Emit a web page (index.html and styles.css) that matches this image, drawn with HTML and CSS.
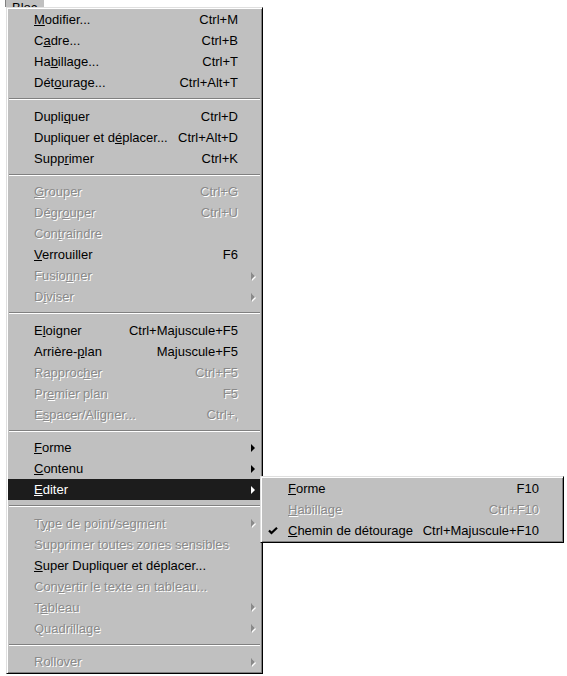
FILE: index.html
```html
<!DOCTYPE html>
<html>
  <head>
    <title>Bloc</title>
    <link rel="stylesheet" href="styles.css">
  </head>
  <body>
    <div class="menubar">
      <span class="menubar-item"><u>B</u>loc</span>
    </div>

    <div class="menu">
      <div class="item"><span class="check"></span><span class="label"><u>M</u>odifier...</span><span class="key">Ctrl+M</span><span class="arrow"></span></div>
      <div class="item"><span class="check"></span><span class="label">C<u>a</u>dre...</span><span class="key">Ctrl+B</span><span class="arrow"></span></div>
      <div class="item"><span class="check"></span><span class="label">Ha<u>b</u>illage...</span><span class="key">Ctrl+T</span><span class="arrow"></span></div>
      <div class="item"><span class="check"></span><span class="label">Dét<u>o</u>urage...</span><span class="key">Ctrl+Alt+T</span><span class="arrow"></span></div>
      <div class="sep"></div>
      <div class="item"><span class="check"></span><span class="label">Dupli<u>q</u>uer</span><span class="key">Ctrl+D</span><span class="arrow"></span></div>
      <div class="item"><span class="check"></span><span class="label">Dupliquer et d<u>é</u>placer...</span><span class="key">Ctrl+Alt+D</span><span class="arrow"></span></div>
      <div class="item"><span class="check"></span><span class="label">Supp<u>r</u>imer</span><span class="key">Ctrl+K</span><span class="arrow"></span></div>
      <div class="sep"></div>
      <div class="item disabled"><span class="check"></span><span class="label"><u>G</u>rouper</span><span class="key">Ctrl+G</span><span class="arrow"></span></div>
      <div class="item disabled"><span class="check"></span><span class="label">Dégr<u>o</u>uper</span><span class="key">Ctrl+U</span><span class="arrow"></span></div>
      <div class="item disabled"><span class="check"></span><span class="label">Con<u>t</u>raindre</span><span class="key"></span><span class="arrow"></span></div>
      <div class="item"><span class="check"></span><span class="label"><u>V</u>errouiller</span><span class="key">F6</span><span class="arrow"></span></div>
      <div class="item disabled"><span class="check"></span><span class="label">Fusio<u>n</u>ner</span><span class="key"></span><span class="arrow sub"></span></div>
      <div class="item disabled"><span class="check"></span><span class="label">D<u>i</u>viser</span><span class="key"></span><span class="arrow sub"></span></div>
      <div class="sep"></div>
      <div class="item"><span class="check"></span><span class="label">E<u>l</u>oigner</span><span class="key">Ctrl+Majuscule+F5</span><span class="arrow"></span></div>
      <div class="item"><span class="check"></span><span class="label">Arrière-<u>p</u>lan</span><span class="key">Majuscule+F5</span><span class="arrow"></span></div>
      <div class="item disabled"><span class="check"></span><span class="label">Rapproc<u>h</u>er</span><span class="key">Ctrl+F5</span><span class="arrow"></span></div>
      <div class="item disabled"><span class="check"></span><span class="label">Pr<u>e</u>mier plan</span><span class="key">F5</span><span class="arrow"></span></div>
      <div class="item disabled"><span class="check"></span><span class="label">E<u>s</u>pacer/Aligner...</span><span class="key">Ctrl+,</span><span class="arrow"></span></div>
      <div class="sep"></div>
      <div class="item"><span class="check"></span><span class="label"><u>F</u>orme</span><span class="key"></span><span class="arrow sub"></span></div>
      <div class="item"><span class="check"></span><span class="label"><u>C</u>ontenu</span><span class="key"></span><span class="arrow sub"></span></div>
      <div class="item active"><span class="check"></span><span class="label"><u>E</u>diter</span><span class="key"></span><span class="arrow sub"></span>
        <div class="menu submenu">
          <div class="item"><span class="check"></span><span class="label"><u>F</u>orme</span><span class="key">F10</span><span class="arrow"></span></div>
          <div class="item disabled"><span class="check"></span><span class="label"><u>H</u>abillage</span><span class="key">Ctrl+F10</span><span class="arrow"></span></div>
          <div class="item"><span class="check"><svg width="10" height="8" viewBox="0 0 10 8"><polyline points="1,3.5 3.5,6 9,0.8" fill="none" stroke="#000" stroke-width="2.2"/></svg></span><span class="label"><u>C</u>hemin de détourage</span><span class="key">Ctrl+Majuscule+F10</span><span class="arrow"></span></div>
        </div>
      </div>
      <div class="sep"></div>
      <div class="item disabled"><span class="check"></span><span class="label">T<u>y</u>pe de point/segment</span><span class="key"></span><span class="arrow sub"></span></div>
      <div class="item disabled"><span class="check"></span><span class="label">Supprimer toutes zones sensibles</span><span class="key"></span><span class="arrow"></span></div>
      <div class="item"><span class="check"></span><span class="label"><u>S</u>uper Dupliquer et déplacer...</span><span class="key"></span><span class="arrow"></span></div>
      <div class="item disabled"><span class="check"></span><span class="label">Con<u>v</u>ertir le texte en tableau...</span><span class="key"></span><span class="arrow"></span></div>
      <div class="item disabled"><span class="check"></span><span class="label">T<u>a</u>bleau</span><span class="key"></span><span class="arrow sub"></span></div>
      <div class="item disabled"><span class="check"></span><span class="label">Quadrillage</span><span class="key"></span><span class="arrow sub"></span></div>
      <div class="sep"></div>
      <div class="item disabled"><span class="check"></span><span class="label">Rollover</span><span class="key"></span><span class="arrow sub"></span></div>
    </div>
  </body>
</html>
```

FILE: styles.css
```css
:root {
  --face: #c0c0c0;
  --light: #dfdfdf;
  --highlight: #ffffff;
  --shadow: #808080;
  --dark: #000000;
  --selected: #1c1c1c;
  --disabled: #8a8a8a;
}

body {
  margin: 0;
  background-color: white;
  font-family: "Liberation Sans", Arial, sans-serif;
  font-size: 13px;
  color: #000;
}

/* top menu bar, mostly scrolled out of view */
.menubar {
  height: 7px;
  padding-left: 5px;
  overflow: hidden;
}

.menubar-item {
  display: inline-block;
  box-sizing: border-box;
  width: 40px;
  height: 16px;
  margin-top: -10px;
  padding-left: 6px;
  line-height: 15px;
  background-color: var(--face);
  border: 1px solid;
  border-color: var(--shadow) var(--highlight) var(--highlight) var(--shadow);
}

.menu {
  box-sizing: border-box;
  width: 257px;
  margin-left: 6px;
  padding: 1px;
  background-color: var(--face);
  border: 1px solid;
  border-color: var(--light) var(--dark) var(--dark) var(--light);
  box-shadow: inset 1px 1px var(--highlight), inset -1px -1px var(--shadow);
}

.item {
  position: relative;
  display: flex;
  align-items: center;
  height: 21px;
  padding-right: 6px;
  white-space: nowrap;
}

.check {
  flex: none;
  width: 26px;
  display: flex;
  align-items: center;
  padding-left: 6px;
  box-sizing: border-box;
}

.check svg {
  display: block;
}

.label {
  flex: 1;
}

.key {
  flex: none;
  padding-left: 4px;
}

.arrow {
  flex: none;
  width: 17px;
  height: 8px;
  display: flex;
  justify-content: flex-end;
}

.arrow.sub::after {
  content: "";
  width: 0;
  height: 0;
  border-left: 4px solid currentColor;
  border-top: 4px solid transparent;
  border-bottom: 4px solid transparent;
}

.disabled {
  color: var(--disabled);
  text-shadow: 1px 1px 0 var(--highlight);
}

.disabled .arrow.sub::after {
  filter: drop-shadow(1px 1px 0 var(--highlight));
}

.active {
  background-color: var(--selected);
  color: white;
}

.sep {
  height: 12.5px;
  display: flex;
  flex-direction: column;
  justify-content: center;
  padding: 0 1px;
}

.sep::before {
  content: "";
  border-top: 1px solid var(--shadow);
  border-bottom: 1px solid var(--highlight);
}

.submenu {
  position: absolute;
  left: calc(100% - 1px);
  top: -3px;
  width: 304px;
  margin-left: 0;
  color: #000;
  text-shadow: none;
}

.submenu .disabled {
  color: var(--disabled);
  text-shadow: 1px 1px 0 var(--highlight);
}
```
